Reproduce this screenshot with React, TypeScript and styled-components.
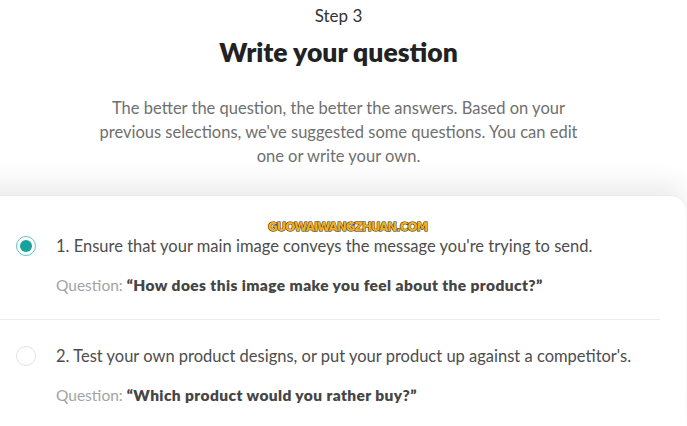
import React from "react";
import styled, { createGlobalStyle } from "styled-components";

const Global = createGlobalStyle`
  html, body { margin: 0; padding: 0; background: #ffffff; }
  body { font-family: Lato, "Noto Sans", sans-serif; -webkit-font-smoothing: antialiased; }
  * { box-sizing: border-box; }
`;

const Page = styled.div`
  width: 687px;
  height: 426px;
  overflow: hidden;
  display: flex;
  flex-direction: column;
  background: #ffffff;
`;

const Header = styled.header`
  display: flex;
  flex-direction: column;
  align-items: center;
  padding: 4px 10px 0 0;
  text-align: center;
`;

const StepLabel = styled.div`
  font-size: 17px;
  line-height: 24px;
  color: #333333;
`;

const Title = styled.h1`
  margin: 7px 0 0;
  font-size: 26.5px;
  line-height: 34px;
  font-weight: 800;
  color: #222222;
`;

const Lead = styled.p`
  margin: 27px 0 0;
  font-size: 16.5px;
  line-height: 24px;
  color: #6f6f6f;
`;

const CardArea = styled.div`
  position: relative;
  margin-top: 27px;
  flex: 1;
`;

const Card = styled.section`
  margin-left: -24px;
  margin-right: 1px;
  height: 100%;
  background: #ffffff;
  border-radius: 0 16px 0 0;
  box-shadow: 0 -12px 24px rgba(0, 0, 0, 0.075);
  border-top: 1px solid #ebebeb;
  padding: 38px 0 0 40px;
  display: flex;
  flex-direction: column;
`;

const Item = styled.label`
  display: grid;
  grid-template-columns: 20px 1fr;
  column-gap: 20px;
  align-items: start;
`;

const Radio = styled.span<{ $checked?: boolean }>`
  width: 20px;
  height: 20px;
  margin-top: 2px;
  border-radius: 50%;
  border: ${(p) => (p.$checked ? "1.5px solid #5fc4c0" : "1.5px solid #e3e3e3")};
  background: #ffffff;
  display: flex;
  align-items: center;
  justify-content: center;
  &::after {
    content: "";
    width: 12px;
    height: 12px;
    border-radius: 50%;
    background: ${(p) => (p.$checked ? "#19a29d" : "transparent")};
  }
`;

const ItemBody = styled.div`
  display: flex;
  flex-direction: column;
`;

const ItemText = styled.div`
  font-size: 16.5px;
  line-height: 24px;
  color: #4d4d4d;
`;

const QuestionLine = styled.div`
  margin-top: 17px;
  font-size: 15.5px;
  line-height: 20px;
  color: #a3a3a3;
`;

const Quote = styled.strong`
  font-weight: 800;
  color: #454545;
  letter-spacing: 0.4px;
`;

const Divider = styled.hr`
  margin: 24px 26px 24px -24px;
  border: 0;
  border-top: 1px solid #eeeeee;
`;

const Watermark = styled.div`
  position: absolute;
  left: 268px;
  top: 25px;
  font-family: "DejaVu Sans Condensed", "DejaVu Sans", sans-serif;
  font-size: 13px;
  line-height: 14px;
  font-weight: 900;
  letter-spacing: -0.9px;
  color: #f2b01e;
  -webkit-text-stroke: 1px #2a1d05;
  paint-order: stroke fill;
`;

const items = [
  {
    text: "1. Ensure that your main image conveys the message you're trying to send.",
    question: "\u201cHow does this image make you feel about the product?\u201d",
    checked: true,
  },
  {
    text: "2. Test your own product designs, or put your product up against a competitor's.",
    question: "\u201cWhich product would you rather buy?\u201d",
    checked: false,
  },
];

export default function App() {
  return (
    <Page>
      <Global />
      <Header>
        <StepLabel>Step 3</StepLabel>
        <Title>Write your question</Title>
        <Lead>
          The better the question, the better the answers. Based on your
          <br />
          previous selections, we've suggested some questions. You can edit
          <br />
          one or write your own.
        </Lead>
      </Header>
      <CardArea>
        <Card>
          {items.map((it, i) => (
            <React.Fragment key={i}>
              {i > 0 && <Divider />}
              <Item>
                <Radio $checked={it.checked} />
                <ItemBody>
                  <ItemText>{it.text}</ItemText>
                  <QuestionLine>
                    Question: <Quote>{it.question}</Quote>
                  </QuestionLine>
                </ItemBody>
              </Item>
            </React.Fragment>
          ))}
        </Card>
        <Watermark>GUOWAIWANGZHUAN.COM</Watermark>
      </CardArea>
    </Page>
  );
}
